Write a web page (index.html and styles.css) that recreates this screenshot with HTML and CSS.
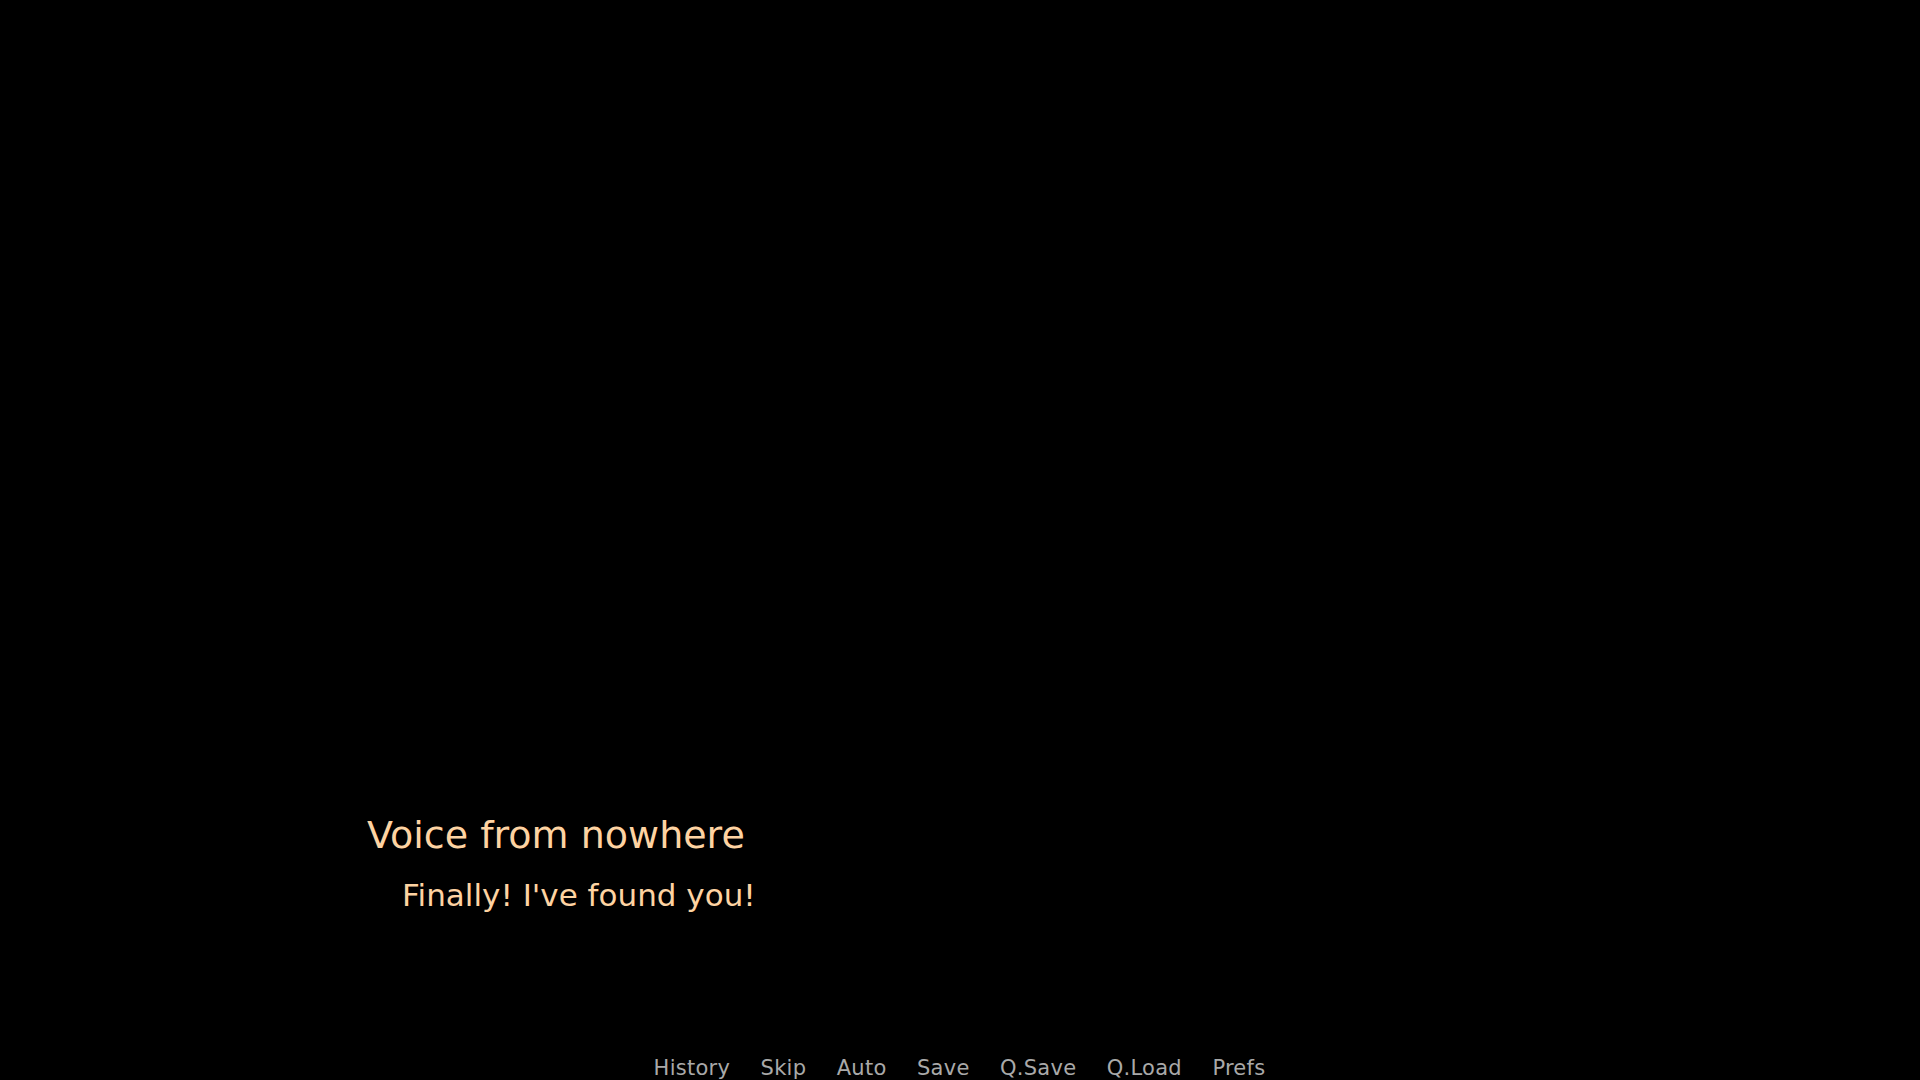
FILE: index.html
```html
<!DOCTYPE html>
<html lang="en">
<head>
<meta charset="utf-8">
<title>Voice from nowhere</title>
<link rel="stylesheet" href="styles.css">
</head>
<body>
<div class="screen">
  <div class="stage"></div>
  <div class="say">
    <div class="namebox">Voice from nowhere</div>
    <div class="dialogue">Finally! I've found you!</div>
  </div>
  <nav class="quick-menu">
    <span class="qbtn">History</span>
    <span class="qbtn">Skip</span>
    <span class="qbtn">Auto</span>
    <span class="qbtn">Save</span>
    <span class="qbtn">Q.Save</span>
    <span class="qbtn">Q.Load</span>
    <span class="qbtn">Prefs</span>
  </nav>
</div>
</body>
</html>
```

FILE: styles.css
```css
html, body {
  margin: 0;
  padding: 0;
  background: #000;
}

body {
  font-family: "DejaVu Sans", "Liberation Sans", sans-serif;
}

.screen {
  width: 1920px;
  height: 1080px;
  display: flex;
  flex-direction: column;
  overflow: hidden;
}

.stage {
  flex: 1;
}

.say {
  padding-bottom: 140px;
  color: #fed3a2;
}

.namebox {
  padding-left: 367px;
  font-size: 38px;
  line-height: 46px;
}

.dialogue {
  margin-top: 17px;
  padding-left: 402px;
  font-size: 31px;
  line-height: 41px;
}

.quick-menu {
  display: flex;
  justify-content: center;
  gap: 30.5px;
  padding-bottom: 0;
  padding-right: 1px;
}

.qbtn {
  font-size: 21px;
  line-height: 24px;
  letter-spacing: 0.25px;
  color: #a9a9a9;
}
```
